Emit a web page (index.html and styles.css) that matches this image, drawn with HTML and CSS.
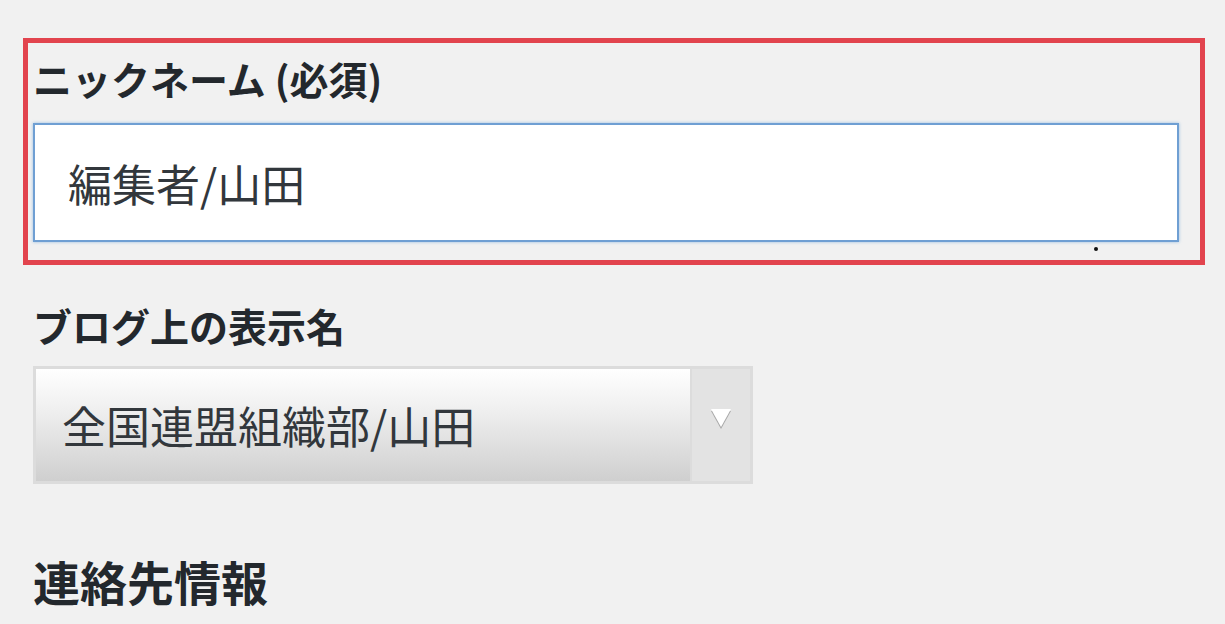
FILE: index.html
```html
<!DOCTYPE html>
<html lang="ja">
<head>
    <meta charset="UTF-8">
    <meta name="viewport" content="width=device-width, initial-scale=1.0">
    <title>プロフィール</title>
    <link rel="stylesheet" href="styles.css">
</head>
<body>
    <div class="highlight">
        <label class="field-label" for="nickname">ニックネーム (必須)</label>
        <input class="text-input" type="text" id="nickname" value="編集者/山田">
        <span class="stray-dot"></span>
    </div>

    <label class="field-label section-gap">ブログ上の表示名</label>
    <div class="select">
        <span class="select-value">全国連盟組織部/山田</span>
        <span class="select-arrow">
            <svg width="22" height="20" viewBox="0 0 22 20">
                <polygon points="1,2 21,2 11,20" fill="#a8a8a8"/>
                <polygon points="1,0 21,0 11,18" fill="#ffffff"/>
            </svg>
        </span>
    </div>

    <h2 class="section-title">連絡先情報</h2>
</body>
</html>
```

FILE: styles.css
```css
body { margin: 0; padding: 0 0 0 33px; background: #f1f1f1; color: #23282d; font-family: "Noto Sans CJK JP", "Noto Sans", sans-serif; }
.highlight { position: relative; box-sizing: border-box; width: 1182px; margin: 38px 0 0 -10px; padding: 10px 21px 18px 5px; border: 5px solid #e2444e; }
.field-label { display: block; font-size: 39px; line-height: 51px; font-weight: bold; }
.text-input { display: block; box-sizing: border-box; width: 100%; height: 119px; margin-top: 19px; padding: 0 33px; border: 2px solid #6f9fd3; box-shadow: 0 0 3px rgba(91, 157, 217, 0.6); background: #fff; color: #32373c; font-family: inherit; font-size: 44px; outline: none; }
.stray-dot { position: absolute; left: 1066px; top: 204px; width: 4px; height: 4px; border-radius: 50%; background: #111; }
.section-gap { margin-top: 35px; }
.select { display: flex; box-sizing: border-box; width: 720px; height: 118px; margin-top: 15px; border: 3px solid #dcdcdc; }
.select-value { flex: 1; display: flex; align-items: center; padding-left: 26px; background: linear-gradient(#ffffff, #f0f0f0 35%, #cfcfcf); color: #32373c; font-size: 44px; border-right: 2px solid #dcdcdc; }
.select-arrow { width: 58px; display: flex; justify-content: center; padding-top: 40px; box-sizing: border-box; background: #e3e3e3; }
.section-title { margin: 67px 0 0; font-size: 47px; line-height: 60px; font-weight: bold; }
```
